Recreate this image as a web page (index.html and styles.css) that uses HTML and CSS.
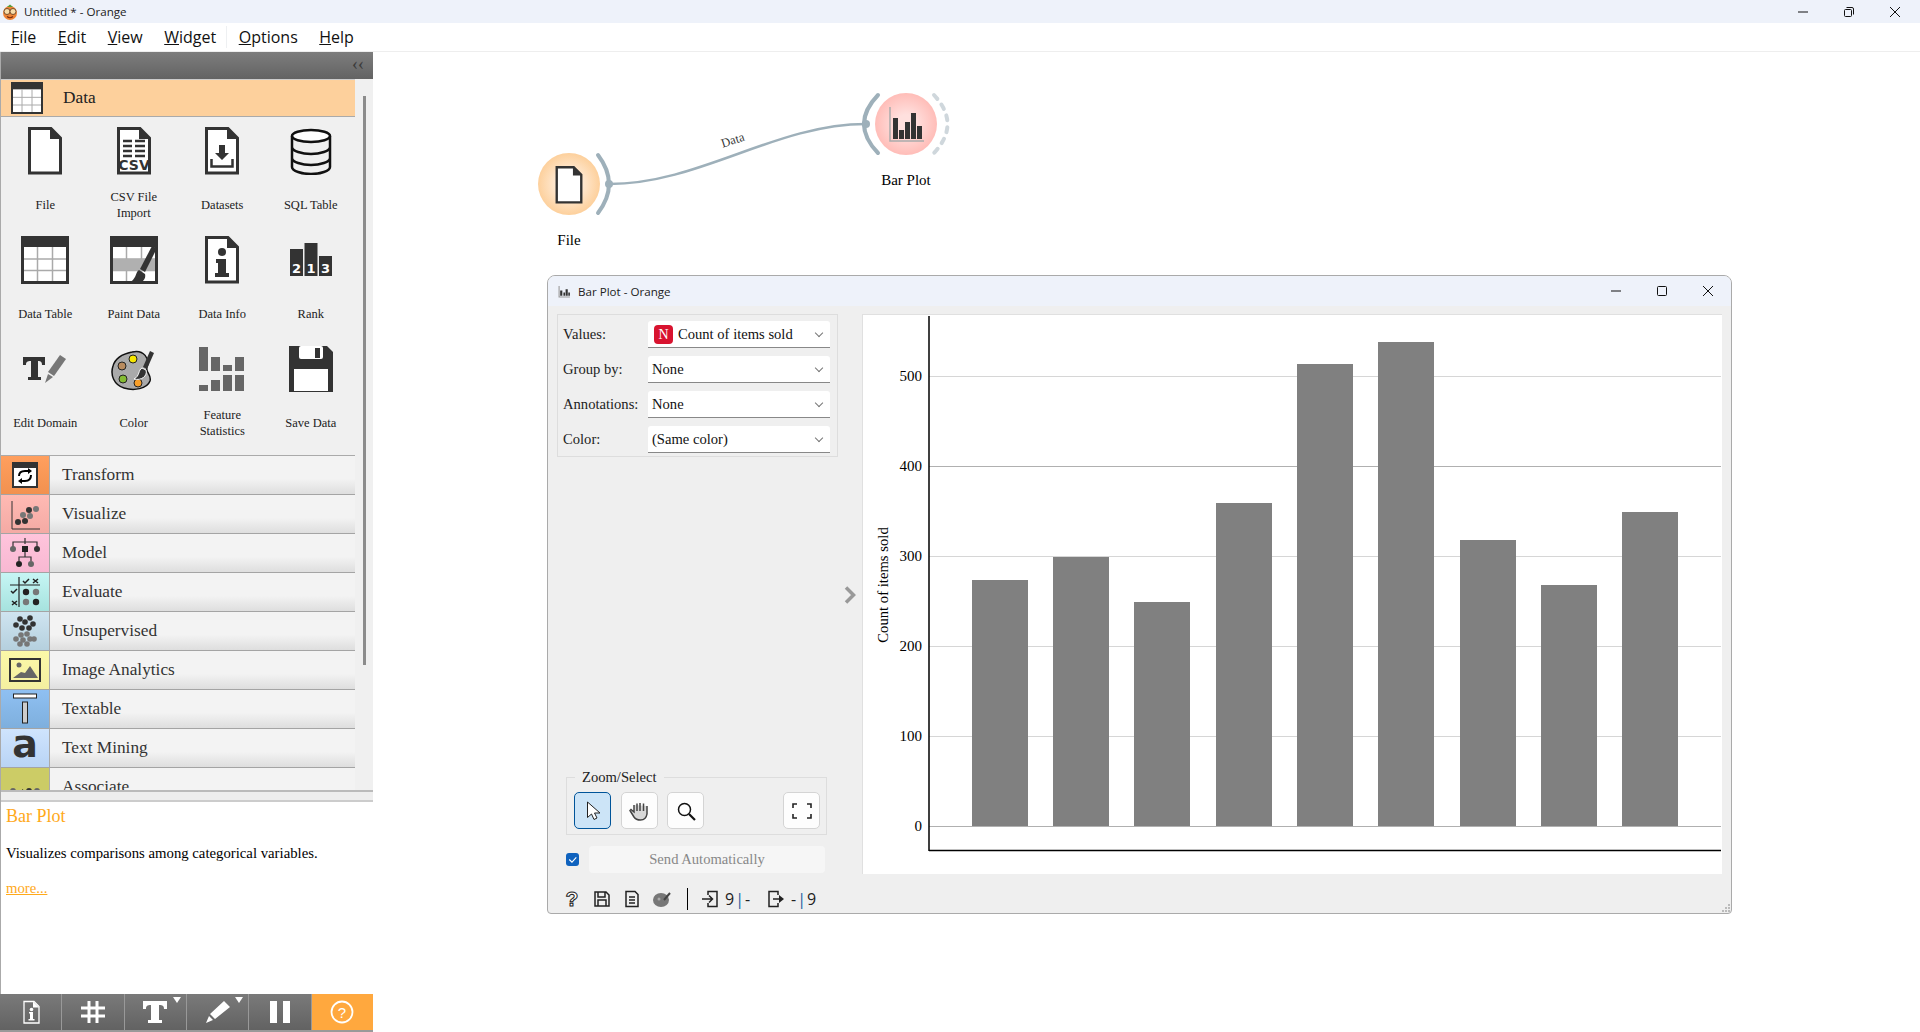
FILE: index.html
```html
<!DOCTYPE html>
<html lang="en">

<head>
    <meta charset="UTF-8">
    <title>Untitled * - Orange</title>
    <link rel="stylesheet" href="styles.css">
</head>

<body>
    <!-- shared icons -->
    <svg class="defs" width="0" height="0">
        <symbol id="i-doc" viewBox="0 0 48 48">
            <path d="M8.5 1.5H30L39.5 11V46H8.5Z" fill="#fff" stroke="#333" stroke-width="3"/>
            <path d="M29 1.5L39.5 12H29Z" fill="#333"/>
        </symbol>
        <symbol id="i-table" viewBox="0 0 48 48">
            <rect x="1.5" y="1.5" width="45" height="45" fill="#fff" stroke="#333" stroke-width="3"/>
            <rect x="1" y="1" width="46" height="10" fill="#333"/>
            <path d="M16.5 11V45M31.5 11V45M3 23H45M3 34.5H45" stroke="#aaa" stroke-width="1.5"/>
        </symbol>
    </svg>

    <header class="titlebar">
        <svg class="logo" viewBox="0 0 16 16">
            <circle cx="8" cy="9" r="7" fill="#ee8436"/>
            <path d="M5 3L8 0.5L11 3Z" fill="#5a9a3a"/>
            <circle cx="5" cy="7.5" r="3" fill="#f8dca8" stroke="#5a3318" stroke-width="0.8"/>
            <circle cx="11" cy="7.5" r="3" fill="#f8dca8" stroke="#5a3318" stroke-width="0.8"/>
            <path d="M5 12.5Q8 15 11 12.5" fill="none" stroke="#7a2c10" stroke-width="1.2"/>
        </svg>
        <span class="titlebar-text">Untitled * - Orange</span>
        <div class="wincontrols">
            <svg viewBox="0 0 12 12"><path d="M1 6H11" stroke="#111"/></svg>
            <svg viewBox="0 0 12 12"><path d="M3.5 1.5H9Q10.5 1.5 10.5 3V8.5M1.5 4.5Q1.5 3.5 2.5 3.5H7.5Q8.5 3.5 8.5 4.5V9.5Q8.5 10.5 7.5 10.5H2.5Q1.5 10.5 1.5 9.5Z" fill="none" stroke="#111"/></svg>
            <svg viewBox="0 0 12 12"><path d="M1 1L11 11M11 1L1 11" stroke="#111"/></svg>
        </div>
    </header>

    <nav class="menubar">
        <a><u>F</u>ile</a>
        <a><u>E</u>dit</a>
        <a><u>V</u>iew</a>
        <a class="menu-last"><u>W</u>idget</a>
        <a><u>O</u>ptions</a>
        <a><u>H</u>elp</a>
    </nav>

    <main class="main">
        <aside class="sidebar">
            <div class="side-head">&#8249;&#8249;</div>

            <div class="dock">
                <div class="dock-list">
                    <div class="cat-open">
                        <svg class="cat-open-icon"><use href="#i-table"/></svg>
                        <span>Data</span>
                    </div>

                    <div class="widgets">
                        <div class="widget">
                            <svg class="w-icon"><use href="#i-doc"/></svg>
                            <div class="w-label">File</div>
                        </div>
                        <div class="widget">
                            <svg class="w-icon" viewBox="0 0 48 48">
                                <use href="#i-doc"/>
                                <path d="M13 14H22M25 14H35M13 19H22M25 19H35M13 24H22M25 24H35M13 29H22M25 29H35" stroke="#333" stroke-width="2.5"/>
                                <text x="24" y="43" class="csv">CSV</text>
                            </svg>
                            <div class="w-label">CSV File<br>Import</div>
                        </div>
                        <div class="widget">
                            <svg class="w-icon" viewBox="0 0 48 48">
                                <use href="#i-doc"/>
                                <path d="M21 18H27V26H31L24 33L17 26H21Z" fill="#333"/>
                                <path d="M13.5 32V39.5H34.5V32" fill="none" stroke="#333" stroke-width="2.5"/>
                            </svg>
                            <div class="w-label">Datasets</div>
                        </div>
                        <div class="widget">
                            <svg class="w-icon" viewBox="0 0 48 48">
                                <ellipse cx="24" cy="9" rx="19" ry="6" fill="#fff" stroke="#111" stroke-width="2.5"/>
                                <path d="M5 9V40C5 44 15 47 24 47S43 44 43 40V9M5 20C5 24 15 27 24 27S43 24 43 20M5 31C5 35 15 38 24 38S43 35 43 31" fill="none" stroke="#111" stroke-width="2.5"/>
                            </svg>
                            <div class="w-label">SQL Table</div>
                        </div>

                        <div class="widget">
                            <svg class="w-icon"><use href="#i-table"/></svg>
                            <div class="w-label">Data Table</div>
                        </div>
                        <div class="widget">
                            <svg class="w-icon" viewBox="0 0 48 48">
                                <use href="#i-table"/>
                                <rect x="3" y="23" width="42" height="11.5" fill="#b0b0b0"/>
                                <path d="M47 12L42 10L30 33L35 36Z" fill="#333"/>
                                <path d="M29 34C25 36 27 44 18 47C27 49 37 46 35 38Z" fill="#333"/>
                            </svg>
                            <div class="w-label">Paint Data</div>
                        </div>
                        <div class="widget">
                            <svg class="w-icon" viewBox="0 0 48 48">
                                <use href="#i-doc"/>
                                <circle cx="24" cy="16" r="4" fill="#333"/>
                                <path d="M18 23H28V37H31V41H17V37H20V27H18Z" fill="#333"/>
                            </svg>
                            <div class="w-label">Data Info</div>
                        </div>
                        <div class="widget">
                            <svg class="w-icon" viewBox="0 0 48 48">
                                <rect x="3" y="13" width="13" height="27" fill="#333"/>
                                <rect x="17.5" y="7" width="13" height="33" fill="#333"/>
                                <rect x="32" y="20" width="13" height="20" fill="#333"/>
                                <text x="9.5" y="37" class="rank">2</text>
                                <text x="24" y="37" class="rank">1</text>
                                <text x="38.5" y="37" class="rank">3</text>
                            </svg>
                            <div class="w-label">Rank</div>
                        </div>

                        <div class="widget">
                            <svg class="w-icon" viewBox="0 0 48 48">
                                <path d="M2 12H24V20H21C21 17 20 16 17 16V32H20V35H7V32H10V16C6 16 5 17 5 20H2Z" fill="#333"/>
                                <path d="M39 10L45 14L33 31L27 27Z" fill="#777"/>
                                <path d="M27 29L32 32L24 38Z" fill="#777"/>
                            </svg>
                            <div class="w-label">Edit Domain</div>
                        </div>
                        <div class="widget">
                            <svg class="w-icon" viewBox="0 0 48 48">
                                <path d="M22 7C34 4 40 14 37 22C35 27 42 30 40 36C37 44 24 46 14 43C4 40 0 30 3 21C5 14 12 9 22 7Z" fill="#aaa" stroke="#111" stroke-width="1.5"/>
                                <circle cx="23" cy="14" r="4" fill="#f6e600" stroke="#222"/>
                                <circle cx="12" cy="21" r="4" fill="#b98b5e" stroke="#222"/>
                                <circle cx="13" cy="34" r="4" fill="#84bb33" stroke="#222"/>
                                <circle cx="28" cy="38" r="4" fill="#f79f2b" stroke="#222"/>
                                <path d="M44 8L40 6L33 22L37 24Z" fill="#333"/>
                                <path d="M32 23C28 25 30 31 24 34C31 36 38 31 36 25Z" fill="#333" stroke="#fff"/>
                            </svg>
                            <div class="w-label">Color</div>
                        </div>
                        <div class="widget">
                            <svg class="w-icon" viewBox="0 0 48 48">
                                <path d="M0 0H9V24H0ZM12 10H21V24H12ZM24 18H33V24H24ZM36 10H45V24H36ZM0 44H9V38H0ZM12 44H21V33H12ZM24 44H33V28H24ZM36 44H45V28H36Z" fill="#666" transform="translate(1 2)"/>
                            </svg>
                            <div class="w-label">Feature<br>Statistics</div>
                        </div>
                        <div class="widget">
                            <svg class="w-icon" viewBox="0 0 48 48">
                                <path d="M2 1H40L46 7V47H2Z" fill="#333"/>
                                <rect x="12" y="1" width="24" height="13" rx="2" fill="#fff"/>
                                <rect x="28" y="3" width="5" height="10" fill="#333"/>
                                <rect x="7" y="24" width="34" height="22" fill="#fff"/>
                            </svg>
                            <div class="w-label">Save Data</div>
                        </div>
                    </div>

                    <div class="cat">
                        <div class="cat-icon c-transform">
                            <svg viewBox="0 0 32 32">
                                <rect x="4" y="4" width="24" height="24" fill="#fff" stroke="#333" stroke-width="2"/>
                                <rect x="4" y="4" width="24" height="5" fill="#333"/>
                                <path d="M10 17Q10 12 16 12H19M22 16Q22 22 16 22H13" fill="none" stroke="#000" stroke-width="2"/>
                                <path d="M19 9L23 12L19 15ZM13 19L9 22L13 25Z" fill="#000"/>
                            </svg>
                        </div>
                        <span>Transform</span>
                    </div>
                    <div class="cat">
                        <div class="cat-icon c-visualize">
                            <svg viewBox="0 0 32 32">
                                <path d="M3 3V31H31" fill="none" stroke="#333"/>
                                <circle cx="9" cy="24" r="3" fill="#333"/><circle cx="16" cy="23" r="3" fill="#333"/>
                                <circle cx="14" cy="17" r="3" fill="#777"/><circle cx="21" cy="18" r="3" fill="#777"/>
                                <circle cx="20" cy="12" r="3" fill="#333"/><circle cx="27" cy="11" r="3" fill="#777"/>
                            </svg>
                        </div>
                        <span>Visualize</span>
                    </div>
                    <div class="cat">
                        <div class="cat-icon c-model">
                            <svg viewBox="0 0 32 32">
                                <path d="M16 1V7M4 10V5H28V10M16 14V20M10 24V20H22V24" fill="none" stroke="#333" stroke-width="1.2"/>
                                <circle cx="4" cy="12" r="3" fill="#666"/><rect x="13" y="9" width="6" height="6" fill="#222"/>
                                <circle cx="28" cy="12" r="3" fill="#333"/><circle cx="10" cy="27" r="3" fill="#222"/>
                                <circle cx="22" cy="27" r="3" fill="#666"/>
                            </svg>
                        </div>
                        <span>Model</span>
                    </div>
                    <div class="cat">
                        <div class="cat-icon c-evaluate">
                            <svg viewBox="0 0 32 32">
                                <path d="M1 9H31M10 1V31" stroke="#222" stroke-width="1.2"/>
                                <path d="M14 5L16 7L20 3M24 3L29 7M29 3L24 7M2 15L4 17L8 13M3 25L8 29M8 25L3 29" fill="none" stroke="#222" stroke-width="1.5"/>
                                <circle cx="17" cy="16" r="3.2" fill="#222"/><circle cx="27" cy="16" r="3.2" fill="#777"/>
                                <circle cx="17" cy="26" r="3.2" fill="#777"/><circle cx="27" cy="26" r="3.2" fill="#222"/>
                            </svg>
                        </div>
                        <span>Evaluate</span>
                    </div>
                    <div class="cat">
                        <div class="cat-icon c-unsup">
                            <svg viewBox="0 0 32 32">
                                <g fill="#333"><circle cx="11" cy="4" r="2.8"/><circle cx="21" cy="3" r="2.8"/><circle cx="16" cy="7" r="2.8"/><circle cx="24" cy="9" r="2.8"/><circle cx="7" cy="10" r="2.8"/><circle cx="13" cy="13" r="2.8"/><circle cx="20" cy="13" r="2.8"/></g>
                                <g fill="#777"><circle cx="12" cy="20" r="2.8"/><circle cx="18" cy="19" r="2.8"/><circle cx="7" cy="24" r="2.8"/><circle cx="14" cy="25" r="2.8"/><circle cx="21" cy="24" r="2.8"/><circle cx="25" cy="24" r="2.8"/><circle cx="11" cy="29" r="2.8"/><circle cx="18" cy="29" r="2.8"/></g>
                            </svg>
                        </div>
                        <span>Unsupervised</span>
                    </div>
                    <div class="cat">
                        <div class="cat-icon c-image">
                            <svg viewBox="0 0 32 32">
                                <rect x="1" y="5" width="30" height="22" fill="none" stroke="#333" stroke-width="2"/>
                                <circle cx="10" cy="11" r="2.5" fill="#666"/>
                                <path d="M4 24L12 18L16 19L21 12L29 24Z" fill="#666"/>
                            </svg>
                        </div>
                        <span>Image Analytics</span>
                    </div>
                    <div class="cat">
                        <div class="cat-icon c-textable">
                            <svg viewBox="0 0 32 32">
                                <rect x="4.5" y="1" width="23" height="4" fill="#fff" stroke="#222"/>
                                <rect x="13.5" y="9" width="5" height="21" fill="#ccc" stroke="#222"/>
                            </svg>
                        </div>
                        <span>Textable</span>
                    </div>
                    <div class="cat">
                        <div class="cat-icon c-textmining"><span class="big-a">a</span></div>
                        <span>Text Mining</span>
                    </div>
                    <div class="cat">
                        <div class="cat-icon c-associate">
                            <svg viewBox="0 0 32 32">
                                <circle cx="4" cy="20" r="3" fill="#666"/><path d="M8 20H14" stroke="#333"/>
                                <path d="M13 18L16 20L13 22Z" fill="#333"/>
                                <circle cx="20" cy="20" r="3" fill="#333"/><circle cx="28" cy="20" r="3" fill="#666"/>
                            </svg>
                        </div>
                        <span>Associate</span>
                    </div>
                </div>
                <div class="dock-scroll"><div class="dock-thumb"></div></div>
            </div>

            <div class="splitter"></div>

            <div class="info">
                <h2>Bar Plot</h2>
                <p>Visualizes comparisons among categorical variables.</p>
                <a>more...</a>
            </div>

            <div class="side-tools">
                <button class="tool">
                    <svg viewBox="0 0 24 24"><path d="M5 1.5H15L20 6.5V23H5Z" fill="none" stroke="#fff" stroke-width="1.3"/><path d="M14 1.5L20 7.5H14Z" fill="#fff"/><circle cx="12.5" cy="9.5" r="1.8" fill="#fff"/><path d="M10 12H14V19H15.5V20.5H9.5V19H11V13.5H10Z" fill="#fff"/></svg>
                </button>
                <button class="tool">
                    <svg viewBox="0 0 24 24"><path d="M8 1V23M16 1V23M0 8H24M0 16H24" stroke="#fff" stroke-width="3"/></svg>
                </button>
                <button class="tool tool-more">
                    <svg viewBox="0 0 24 24"><path d="M0 1H24V9H21C21 6 20 5 16 5V20H19V23H5V20H8V5C4 5 3 6 3 9H0Z" fill="#fff"/></svg>
                </button>
                <button class="tool tool-more">
                    <svg viewBox="0 0 24 24"><path d="M18 1L24 7L9 19L4 14ZM3 16L7 20L0 23Z" fill="#fff"/></svg>
                </button>
                <button class="tool">
                    <svg viewBox="0 0 24 24"><path d="M2 1H9V23H2ZM15 1H22V23H15Z" fill="#fff"/></svg>
                </button>
                <button class="tool tool-help">
                    <svg viewBox="0 0 24 24"><circle cx="12" cy="12" r="10.5" fill="none" stroke="#fff" stroke-width="1.8"/><text x="12" y="18" class="help-q">?</text></svg>
                </button>
            </div>
        </aside>

        <section class="canvas">
            <svg class="scheme" width="1547" height="220" viewBox="373 52 1547 220">
                <defs>
                    <radialGradient id="g-file"><stop offset="0.3" stop-color="#ffeedd"/><stop offset="1" stop-color="#fdd09c"/></radialGradient>
                    <radialGradient id="g-bar"><stop offset="0.3" stop-color="#ffe0de"/><stop offset="1" stop-color="#ffbdb8"/></radialGradient>
                </defs>
                <path d="M609 184C700 184 775 124 866 124" fill="none" stroke="#9eb0ba" stroke-width="2.5"/>
                <text class="link-label" transform="translate(734 144) rotate(-18)">Data</text>

                <circle cx="569" cy="184" r="31" fill="url(#g-file)"/>
                <path d="M598 155Q620 184 598 213" fill="none" stroke="#9eb0ba" stroke-width="4" stroke-linecap="round"/>
                <circle cx="609" cy="184" r="4" fill="#9eb0ba"/>
                <svg x="550" y="166" width="38" height="38"><use href="#i-doc"/></svg>
                <text x="569" y="245" class="node-label">File</text>

                <circle cx="906" cy="124" r="31" fill="url(#g-bar)"/>
                <path d="M878 95Q850 124 878 153" fill="none" stroke="#9eb0ba" stroke-width="4" stroke-linecap="round"/>
                <circle cx="866" cy="124" r="4" fill="#9eb0ba"/>
                <path d="M934 95Q961 124 934 153" fill="none" stroke="#cfd7dc" stroke-width="4" stroke-linecap="round" stroke-dasharray="5 7"/>
                <path d="M890 107V141H924" fill="none" stroke="#aaa" stroke-width="1.5"/>
                <path d="M893 118H898V139H893ZM899 130H904V139H899ZM905 122H910V139H905ZM911 113H916V139H911ZM917 126H922V139H917Z" fill="#333"/>
                <text x="906" y="185" class="node-label">Bar Plot</text>
            </svg>

            <div class="window">
                <div class="win-title">
                    <svg class="win-icon" viewBox="0 0 12 12"><path d="M1 1V11H11" fill="none" stroke="#999"/><path d="M2 5H4V10H2ZM5 7H6.5V10H5ZM7 4H9V10H7ZM9.5 7H11V10H9.5Z" fill="#333"/></svg>
                    <span>Bar Plot - Orange</span>
                    <div class="wincontrols win-small">
                        <svg viewBox="0 0 12 12"><path d="M1 6H11" stroke="#111"/></svg>
                        <svg viewBox="0 0 12 12"><rect x="1.5" y="1.5" width="9" height="9" rx="1" fill="none" stroke="#111"/></svg>
                        <svg viewBox="0 0 12 12"><path d="M1 1L11 11M11 1L1 11" stroke="#111"/></svg>
                    </div>
                </div>

                <div class="win-body">
                    <div class="controls">
                        <div class="form">
                            <label>Values:</label>
                            <div class="combo"><span class="tag">N</span>Count of items sold<i></i></div>
                            <label>Group by:</label>
                            <div class="combo">None<i></i></div>
                            <label>Annotations:</label>
                            <div class="combo">None<i></i></div>
                            <label>Color:</label>
                            <div class="combo">(Same color)<i></i></div>
                        </div>

                        <fieldset class="zoombox">
                            <legend>Zoom/Select</legend>
                            <div class="zoomrow">
                                <button class="zbtn zbtn-on">
                                    <svg viewBox="0 0 20 20"><path d="M4.5 1V16.5L8.5 13L11 18.5L14 17L11.5 12H17Z" fill="#fff" stroke="#222"/></svg>
                                </button>
                                <button class="zbtn">
                                    <svg viewBox="0 0 20 20"><path d="M5 4V11L2 8.5L1 9.5L5 16Q7 19 11.5 19Q17 19 18 13V5M8 2.5V10M11 2V10M14.5 2.5V10" fill="#d8d8d8" stroke="#444" stroke-width="1.5"/></svg>
                                </button>
                                <button class="zbtn">
                                    <svg viewBox="0 0 20 20"><circle cx="8.5" cy="8.5" r="6" fill="#fff" stroke="#111" stroke-width="1.5"/><path d="M13 13L19 19" stroke="#111" stroke-width="2.2"/></svg>
                                </button>
                                <button class="zbtn zbtn-fit">
                                    <svg viewBox="0 0 20 20"><path d="M1 7V3H5M15 3H19V7M1 13V17H5M15 17H19V13" fill="none" stroke="#222" stroke-width="1.6"/></svg>
                                </button>
                            </div>
                        </fieldset>

                        <div class="sendrow">
                            <span class="check"><svg viewBox="0 0 12 12"><path d="M3 6L5.5 8.5L9.5 4" fill="none" stroke="#fff"/></svg></span>
                            <button class="sendbtn">Send Automatically</button>
                        </div>
                    </div>

                    <div class="expander">
                        <svg width="12" height="18" viewBox="0 0 12 18"><path d="M2 1.5L9.5 9L2 16.5" fill="none" stroke="#999" stroke-width="3.5"/></svg>
                    </div>

                    <div class="plot">
                        <svg width="858" height="559" viewBox="0 0 858 559">
                            <g class="grid">
                                <path d="M66 61.5H858M66 241.5H858M66 331.5H858M66 421.5H858" stroke="#d6d6d6"/>
                                <path d="M66 151.5H858M66 511.5H858" stroke="#b0b0b0"/>
                            </g>
                            <g fill="#808080">
                                <rect x="109" y="265" width="56" height="246"/>
                                <rect x="190" y="242" width="56" height="269"/>
                                <rect x="271" y="287" width="56" height="224"/>
                                <rect x="353" y="188" width="56" height="323"/>
                                <rect x="434" y="49" width="56" height="462"/>
                                <rect x="515" y="27" width="56" height="484"/>
                                <rect x="597" y="225" width="56" height="286"/>
                                <rect x="678" y="270" width="56" height="241"/>
                                <rect x="759" y="197" width="56" height="314"/>
                            </g>
                            <path d="M66 1V536M66 535.5H858" fill="none" stroke="#000" stroke-width="1.5"/>
                            <g class="ticks">
                                <text x="59" y="66">500</text>
                                <text x="59" y="156">400</text>
                                <text x="59" y="246">300</text>
                                <text x="59" y="336">200</text>
                                <text x="59" y="426">100</text>
                                <text x="59" y="516">0</text>
                            </g>
                            <text class="axis-title" transform="translate(25 270) rotate(-90)">Count of items sold</text>
                        </svg>
                    </div>
                </div>

                <div class="statusbar">
                    <span class="status-q">?</span>
                    <svg viewBox="0 0 18 18"><path d="M2 2H13L16 5V16H2ZM5 2V7H12V2M5 16V10H13V16" fill="none" stroke="#222" stroke-width="1.5"/></svg>
                    <svg viewBox="0 0 18 18"><path d="M3 1.5H12L15 4.5V16.5H3ZM6 7H12M6 10H12M6 13H12" fill="none" stroke="#222" stroke-width="1.5"/></svg>
                    <svg viewBox="0 0 18 18"><ellipse cx="8" cy="10" rx="8" ry="7" fill="#777"/><path d="M17 3L11 10" stroke="#444" stroke-width="2"/><circle cx="6" cy="9" r="1.5" fill="#aaa"/></svg>
                    <span class="status-sep"></span>
                    <svg viewBox="0 0 18 18"><path d="M7 5V1.5H16V16.5H7V13M1 9H11M8 5.5L11.5 9L8 12.5" fill="none" stroke="#222" stroke-width="1.5"/></svg>
                    <span class="count">9<b>|</b>-</span>
                    <svg class="status-out" viewBox="0 0 18 18"><path d="M11 5V1.5H2V16.5H11V13M6 9H15" fill="none" stroke="#222" stroke-width="1.5"/><path d="M12 5L17 9L12 13Z" fill="#222"/></svg>
                    <span class="count">-<b>|</b>9</span>
                </div>
                <svg class="grip" width="10" height="10" viewBox="0 0 10 10"><path d="M7 1h2v2h-2zM4 4h2v2h-2zM7 4h2v2h-2zM1 7h2v2h-2zM4 7h2v2h-2zM7 7h2v2h-2z" fill="#bbb"/></svg>
            </div>
        </section>
    </main>
</body>

</html>
```

FILE: styles.css
```css
/* page */
* {
    box-sizing: border-box;
}

html,
body {
    margin: 0;
    height: 100%;
    overflow: hidden;
}

body {
    display: flex;
    flex-direction: column;
    background: #fff;
    font-family: "Liberation Serif", serif;
    color: #222;
}

.defs {
    position: absolute;
}

/* main window title + menu */
.titlebar {
    height: 23px;
    flex: none;
    display: flex;
    align-items: center;
    background: #eef2fa;
    padding-left: 2px;
    font-family: "Open Sans", sans-serif;
    font-size: 11.6px;
}

.logo {
    width: 16px;
    height: 16px;
    margin-right: 6px;
}

.wincontrols {
    margin-left: auto;
    display: flex;
    gap: 34px;
    padding-right: 19px;
}

.wincontrols svg {
    width: 12px;
    height: 12px;
    display: block;
}

.menubar {
    height: 29px;
    flex: none;
    display: flex;
    align-items: center;
    padding-left: 11px;
    border-bottom: 1px solid #eee;
    font-family: "Open Sans", sans-serif;
    font-size: 16px;
    color: #111;
    gap: 21.5px;
}

.menu-last {
    padding-right: 10px;
    border-right: 1px solid #eef0f2;
    margin-right: -10px;
}

.main {
    flex: 1;
    display: flex;
    min-height: 0;
}

/* left dock */
.sidebar {
    width: 373px;
    flex: none;
    display: flex;
    flex-direction: column;
    background: #f0f0f0;
    border-left: 1px solid #aaa;
}

.side-head {
    height: 27px;
    flex: none;
    background: linear-gradient(#7d7d7d, #636363);
    color: #3b3b3b;
    font-size: 18px;
    line-height: 24px;
    text-align: right;
    padding-right: 9px;
}

.dock {
    height: 711px;
    flex: none;
    display: flex;
    overflow: hidden;
}

.dock-list {
    width: 354px;
    flex: none;
}

.dock-scroll {
    flex: 1;
    padding: 17px 0 0 8px;
}

.dock-thumb {
    width: 3px;
    height: 569px;
    background: #8c8c8c;
}

.cat-open {
    height: 38px;
    display: flex;
    align-items: center;
    background: #fdd09c;
    border-top: 1px solid #ccc;
    border-bottom: 1px solid #aaa;
    font-size: 17.3px;
    padding-left: 10px;
}

.cat-open-icon {
    width: 32px;
    height: 32px;
    margin-right: 20px;
}

.widgets {
    display: grid;
    grid-template-columns: repeat(4, 1fr);
    padding: 2px 0 9px;
    border-bottom: 1px solid #aaa;
}

.widget {
    height: 109px;
    padding-top: 8px;
    text-align: center;
}

.w-icon {
    width: 48px;
    height: 48px;
    display: block;
    margin: 0 auto;
}

.w-label {
    height: 36px;
    margin-top: 12px;
    display: flex;
    align-items: center;
    justify-content: center;
    font-size: 12.5px;
    line-height: 16px;
}

.csv {
    font-family: "DejaVu Sans", sans-serif;
    font-weight: bold;
    font-size: 14px;
    fill: #333;
    text-anchor: middle;
}

.rank {
    font-family: "DejaVu Sans", sans-serif;
    font-weight: bold;
    font-size: 13px;
    fill: #fff;
    text-anchor: middle;
}

.cat {
    height: 39px;
    display: flex;
    align-items: center;
    background: linear-gradient(#f3f3f3 60%, #dedede);
    border-bottom: 1px solid #a4a4a4;
    font-size: 17.3px;
    color: #333;
}

.cat-icon {
    width: 49px;
    height: 38px;
    display: flex;
    align-items: center;
    justify-content: center;
    border-right: 1px solid #aaa;
    margin-right: 12px;
}

.cat-icon svg {
    width: 32px;
    height: 32px;
}

.c-transform { background: linear-gradient(#ff9f5e, #f2914f); }
.c-visualize { background: linear-gradient(#ffbab4, #f4aaa4); }
.c-model { background: linear-gradient(#ffc4dc, #f8b8d2); }
.c-evaluate { background: linear-gradient(#c6f5f4, #a6e2de); }
.c-unsup { background: linear-gradient(#cfe4f0, #b5d0de); }
.c-image { background: linear-gradient(#fbf8a8, #f4efa0); }
.c-textable { background: linear-gradient(#8fc0f2, #7eafdd); }
.c-textmining { background: linear-gradient(#cfe4fd, #b9d4f5); }
.c-associate { background: #cccc66; }

.big-a {
    font-family: "DejaVu Sans", sans-serif;
    font-weight: bold;
    font-size: 38px;
    line-height: 32px;
    color: #333;
    margin-top: -8px;
}

.splitter {
    height: 12px;
    flex: none;
    background: #eee;
    border-top: 2px solid #bbb;
    border-bottom: 2px solid #ccc;
}

.info {
    flex: 1;
    background: #fff;
    padding: 4px 5px;
    font-size: 14.75px;
    color: #000;
}

.info h2 {
    margin: 0;
    font-size: 18px;
    font-weight: normal;
    line-height: 20px;
    color: #ffa91a;
}

.info p {
    margin: 17px 0 0;
    line-height: 20px;
}

.info a {
    display: block;
    margin-top: 15px;
    line-height: 20px;
    color: #ffa91a;
    text-decoration: underline;
}

.side-tools {
    height: 38px;
    flex: none;
    display: flex;
    gap: 1px;
    margin-left: -1px;
    padding-bottom: 2px;
    background: #999;
}

.tool {
    flex: 1;
    border: 0;
    padding: 0;
    position: relative;
    display: flex;
    align-items: center;
    justify-content: center;
    background: linear-gradient(#7a7a7a, #626262);
}

.tool svg {
    width: 24px;
    height: 24px;
}

.tool-more::after {
    content: "";
    position: absolute;
    top: 3px;
    right: 5px;
    border-left: 4px solid transparent;
    border-right: 4px solid transparent;
    border-top: 6px solid #fff;
}

.tool-help {
    background: #ffa83e;
}

.help-q {
    font-family: "Liberation Sans", sans-serif;
    font-size: 15px;
    fill: #fff;
    text-anchor: middle;
}

/* canvas */
.canvas {
    flex: 1;
    position: relative;
    background: #fff;
}

.scheme {
    position: absolute;
    left: 0;
    top: 0;
}

.link-label {
    font-size: 12.5px;
    fill: #333;
    text-anchor: middle;
}

.node-label {
    font-size: 15px;
    fill: #000;
    text-anchor: middle;
}

/* bar plot window */
.window {
    position: absolute;
    left: 174px;
    top: 223px;
    width: 1185px;
    height: 639px;
    display: flex;
    flex-direction: column;
    background: #efefef;
    border: 1px solid #aaa;
    border-radius: 8px 8px 4px 4px;
    overflow: hidden;
}

.win-title {
    height: 30px;
    flex: none;
    display: flex;
    align-items: center;
    background: #eef2fa;
    padding-left: 10px;
    font-family: "Open Sans", sans-serif;
    font-size: 11.6px;
    color: #222;
}

.win-icon {
    width: 13px;
    height: 13px;
    margin-right: 7px;
}

.win-small {
    gap: 34px;
    padding-right: 17px;
}

.win-body {
    height: 560px;
    margin-top: 8px;
    flex: none;
    display: flex;
    padding-left: 9px;
}

.controls {
    width: 281px;
    flex: none;
    display: flex;
    flex-direction: column;
    font-size: 14.6px;
}

.form {
    height: 143px;
    display: grid;
    grid-template-columns: 85px 182px;
    grid-auto-rows: 27px;
    row-gap: 8px;
    align-items: center;
    padding: 6px 0 0 5px;
    border: 1px solid #ddd;
}

.combo {
    height: 27px;
    display: flex;
    align-items: center;
    padding-left: 4px;
    background: #fff;
    border-bottom: 1px solid #888;
    border-radius: 3px 3px 0 0;
    color: #111;
    position: relative;
}

.combo i {
    width: 6px;
    height: 6px;
    margin-left: auto;
    margin-right: 8px;
    margin-top: -3px;
    border-right: 1px solid #777;
    border-bottom: 1px solid #777;
    transform: rotate(45deg);
}

.tag {
    width: 19px;
    height: 19px;
    margin: 0 5px 0 2px;
    border-radius: 4px;
    background: #d8132f;
    color: #fff;
    font-size: 14px;
    line-height: 19px;
    text-align: center;
}

.zoombox {
    width: 261px;
    margin: auto 0 0 9px;
    padding: 7px 6px 5px 7px;
    border: 1px solid #ddd;
    min-inline-size: 0;
}

.zoombox legend {
    margin-left: 1px;
    padding: 0 7px;
    line-height: 16px;
    font-size: 14.6px;
}

.zoomrow {
    display: flex;
    gap: 9.5px;
}

.zbtn {
    width: 37px;
    height: 37px;
    padding: 0;
    display: flex;
    align-items: center;
    justify-content: center;
    background: #fdfdfd;
    border: 1px solid #d4d4d4;
    border-radius: 5px;
}

.zbtn svg {
    width: 20px;
    height: 20px;
}

.zbtn-on {
    background: #cce4f7;
    border-color: #005499;
}

.zbtn-fit {
    margin-left: auto;
}

.sendrow {
    height: 27px;
    margin: 11px 0 1px 9px;
    display: flex;
    align-items: center;
    gap: 10px;
}

.check {
    width: 13px;
    height: 13px;
    display: block;
    border-radius: 3px;
    background: #0f62be;
}

.check svg {
    display: block;
}

.sendbtn {
    width: 236px;
    height: 27px;
    border: 0;
    border-radius: 4px;
    background: #f6f6f6;
    color: #888;
    font-family: "Liberation Serif", serif;
    font-size: 14.6px;
}

.expander {
    width: 24px;
    flex: none;
    display: flex;
    align-items: center;
    justify-content: center;
    padding-top: 2px;
}

.plot {
    width: 860px;
    flex: none;
    background: #fff;
    border-left: 1px solid #e0e0e0;
    border-top: 1px solid #e0e0e0;
}

.plot svg {
    display: block;
}

.ticks text {
    font-size: 15px;
    text-anchor: end;
    fill: #000;
}

.axis-title {
    font-size: 14.7px;
    text-anchor: middle;
    fill: #000;
}

.statusbar {
    flex: 1;
    display: flex;
    align-items: center;
    gap: 12px;
    padding: 10px 0 0 15px;
    font-family: "Open Sans", sans-serif;
    font-size: 16px;
    color: #222;
}

.statusbar svg {
    width: 18px;
    height: 18px;
    flex: none;
}

.status-q {
    width: 18px;
    flex: none;
    font-family: "Liberation Sans", sans-serif;
    font-weight: bold;
    font-size: 21px;
    line-height: 24px;
    text-align: center;
    color: #fff;
    -webkit-text-stroke: 1px #222;
}

.status-sep {
    width: 1px;
    height: 22px;
    background: #000;
    margin: 0 1px 0 4px;
}

.count {
    margin-left: -6px;
    letter-spacing: 1px;
}

.count b {
    font-weight: normal;
    color: #1f5f9f;
}

.status-out {
    margin-left: 4px;
}

.grip {
    position: absolute;
    right: 0;
    bottom: 0;
}
```
